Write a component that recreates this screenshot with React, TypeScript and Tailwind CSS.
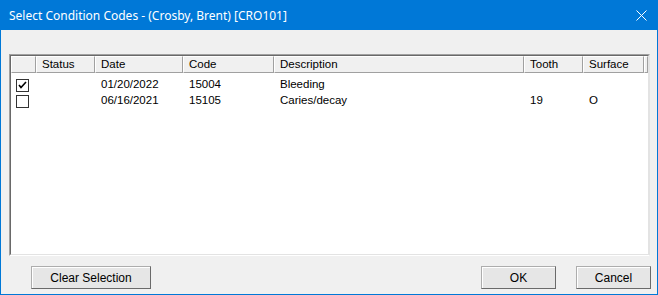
const columns = [
  { key: 'check', label: '', width: 25 },
  { key: 'status', label: 'Status', width: 59 },
  { key: 'date', label: 'Date', width: 88 },
  { key: 'code', label: 'Code', width: 91 },
  { key: 'description', label: 'Description', width: 250 },
  { key: 'tooth', label: 'Tooth', width: 59 },
  { key: 'surface', label: 'Surface', width: 61 },
];

const rows = [
  { checked: true, status: '', date: '01/20/2022', code: '15004', description: 'Bleeding', tooth: '', surface: '' },
  { checked: false, status: '', date: '06/16/2021', code: '15105', description: 'Caries/decay', tooth: '19', surface: 'O' },
];

function Checkbox({ checked }: { checked: boolean }) {
  return (
    <svg width="13" height="13" viewBox="0 0 13 13" className="block">
      <rect x="0.5" y="0.5" width="12" height="12" fill="#fff" stroke="#333" />
      {checked && <path d="M3 6 L5 8.5 L10 3" fill="none" stroke="#000" strokeWidth="1.6" />}
    </svg>
  );
}

function Button({ label, width }: { label: string; width: number }) {
  return (
    <button
      className="h-[23px] border border-[#adadad] border-r-[#6a6a6a] border-b-[#6a6a6a] bg-[#e6e6e6] text-[12px] text-black shadow-[inset_1px_1px_0_#fff]"
      style={{ width }}
    >
      {label}
    </button>
  );
}

export default function App() {
  return (
    <div className="flex h-[295px] w-[658px] flex-col border border-[#0078d7] bg-[#f0f0f0] font-['Liberation_Sans',Arial,sans-serif]">
      <div className="flex h-[29px] shrink-0 items-center justify-between bg-[#0078d7] pl-[8px] pr-[10px] text-white">
        <span className="font-['Noto_Sans',sans-serif] text-[12px] leading-none">
          Select Condition Codes - (Crosby, Brent) [CRO101]
        </span>
        <svg width="11" height="11" viewBox="0 0 11 11">
          <path d="M0.5 0.5 L10.5 10.5 M10.5 0.5 L0.5 10.5" stroke="#fff" strokeWidth="1" />
        </svg>
      </div>

      <div className="ml-[8px] mt-[24px] h-[202px] w-[641px] border border-[#a0a0a0] border-b-[#fff] border-r-[#e3e3e3]">
        <div className="h-full w-full border border-[#696969] border-b-[#e3e3e3] border-r-[#e3e3e3] bg-white">
          <div className="flex h-[17px] bg-[#f0f0f0] text-[11.5px] text-black">
            {columns.map((c) => (
              <div
                key={c.key}
                className="flex shrink-0 items-center border border-[#fff] border-b-[#a0a0a0] border-r-[#a0a0a0] pl-[5px] leading-none"
                style={{ width: c.width }}
              >
                {c.label}
              </div>
            ))}
            <div className="flex-1 border border-[#fff] border-b-[#a0a0a0] border-r-[#a0a0a0]" />
          </div>
          <div className="pt-[4px]">
            {rows.map((r, i) => (
              <div key={i} className="flex h-[16px] items-center text-[11.5px] text-black">
                <div className="flex shrink-0 items-center pl-[5px]" style={{ width: 25 }}>
                  <Checkbox checked={r.checked} />
                </div>
                <div className="shrink-0 pl-[6px]" style={{ width: 59 }}>{r.status}</div>
                <div className="shrink-0 pl-[6px]" style={{ width: 88 }}>{r.date}</div>
                <div className="shrink-0 pl-[6px]" style={{ width: 91 }}>{r.code}</div>
                <div className="shrink-0 pl-[6px]" style={{ width: 250 }}>{r.description}</div>
                <div className="shrink-0 pl-[6px]" style={{ width: 59 }}>{r.tooth}</div>
                <div className="shrink-0 pl-[6px]" style={{ width: 61 }}>{r.surface}</div>
              </div>
            ))}
          </div>
        </div>
      </div>

      <div className="mt-[10px] flex items-center pl-[30px] pr-[6px]">
        <Button label="Clear Selection" width={120} />
        <div className="flex-1" />
        <Button label="OK" width={75} />
        <div className="w-[20px]" />
        <Button label="Cancel" width={75} />
      </div>
    </div>
  );
}
